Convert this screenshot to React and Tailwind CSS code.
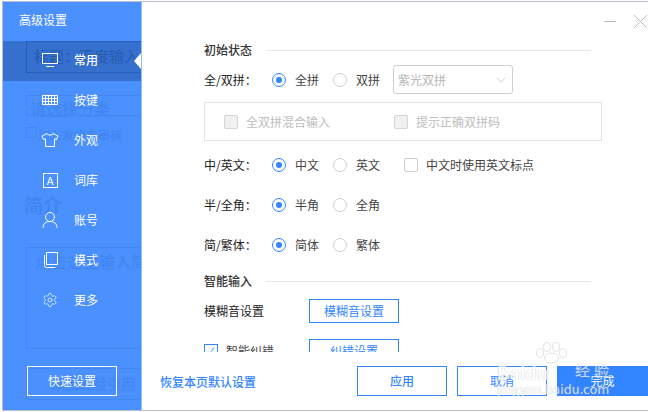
import React from "react";
import { Settings, ChevronDown } from "lucide-react";

const FONT = { fontFamily: '"Noto Sans CJK SC", "Noto Sans", sans-serif' };

function MonitorIcon() {
  return (
    <svg width="18" height="16" viewBox="0 0 18 16" fill="none" stroke="white" strokeWidth="1">
      <rect x="1.5" y="1.5" width="15" height="10" />
      <path d="M5 14.5h8" />
    </svg>
  );
}

function KeyboardIcon() {
  return (
    <svg width="18" height="11" viewBox="0 0 18 11" fill="none" stroke="white" strokeWidth="1">
      <path d="M1.5 0.5h15v9h-15z M1.5 3.5h15 M1.5 6.5h15 M4.5 0.5v9 M7.5 0.5v9 M10.5 0.5v9 M13.5 0.5v9" />
    </svg>
  );
}

function ShirtIcon() {
  return (
    <svg width="18" height="16" viewBox="0 0 18 16" fill="none" stroke="white" strokeWidth="1">
      <path d="M6 1.5 L1 4 L2.5 7.5 L4.5 6.8 V14.5 H13.5 V6.8 L15.5 7.5 L17 4 L12 1.5 C11.5 3.5 6.5 3.5 6 1.5 Z" />
    </svg>
  );
}

function UserIcon() {
  return (
    <svg width="16" height="18" viewBox="0 0 16 18" fill="none" stroke="white" strokeWidth="1">
      <circle cx="8" cy="6" r="4.5" />
      <path d="M1 17 C1 12.5 4 10.5 8 10.5 C12 10.5 15 12.5 15 17" />
    </svg>
  );
}

function CopyIcon() {
  return (
    <svg width="16" height="16" viewBox="0 0 16 16" fill="none" stroke="white" strokeWidth="1">
      <rect x="4.5" y="0.5" width="11" height="12" />
      <path d="M2.5 3v10.5a2 2 0 0 0 2 2h9" />
    </svg>
  );
}

function LetterIcon() {
  return (
    <span className="flex h-[15px] w-[15px] items-center justify-center border border-white text-[11px] leading-none text-white">
      A
    </span>
  );
}

const NAV = [
  { label: "常用", icon: <MonitorIcon />, active: true },
  { label: "按键", icon: <KeyboardIcon /> },
  { label: "外观", icon: <ShirtIcon /> },
  { label: "词库", icon: <LetterIcon /> },
  { label: "账号", icon: <UserIcon /> },
  { label: "模式", icon: <CopyIcon /> },
  { label: "更多", icon: <Settings size={16} strokeWidth={1} color="white" /> },
];

function Radio({ checked, label, width = "w-[61px]" }) {
  return (
    <div className={`flex items-center gap-[9px] ${width}`}>
      {checked ? (
        <span className="flex h-[14px] w-[14px] shrink-0 items-center justify-center rounded-full border border-[#3385ff]">
          <span className="h-[6px] w-[6px] rounded-full bg-[#3385ff]" />
        </span>
      ) : (
        <span className="h-[14px] w-[14px] shrink-0 rounded-full border border-[#cfcfcf]" />
      )}
      <span className="text-[#444]">{label}</span>
    </div>
  );
}

function Check({ label, disabled }) {
  return (
    <div className="flex items-center gap-[8px]">
      <span
        className={
          disabled
            ? "h-[14px] w-[14px] rounded-[2px] border border-[#d5d5d5] bg-[#f0f0f0]"
            : "h-[14px] w-[14px] rounded-[2px] border border-[#cfcfcf]"
        }
      />
      <span className={disabled ? "text-[#bdbdbd]" : "text-[#444]"}>{label}</span>
    </div>
  );
}

function SectionTitle({ children }) {
  return (
    <div className="flex items-center gap-[14px] pr-[11px]">
      <span className="font-medium text-[#333]">{children}</span>
      <span className="h-px flex-1 bg-[#e8e8e8]" />
    </div>
  );
}

function OptionRow({ label, a, b, children }) {
  return (
    <div className="flex h-[20px] items-center">
      <span className="w-[68px] text-[#222]">{label}</span>
      <Radio checked label={a} />
      <Radio label={b} />
      {children}
    </div>
  );
}

function GhostPage() {
  // the page behind the translucent sidebar
  return (
    <div className="absolute inset-0 overflow-hidden whitespace-nowrap text-[#3f84ec]">
      <div className="absolute left-[23px] top-[39px] h-[32px] w-[130px] border border-[#2f6fd0] pl-[7px] pt-[3px] text-[15px] text-[#2a66c4]">
        标题：而度输入
      </div>
      <div className="absolute left-[23px] top-[93px] h-[21px] w-[130px] border border-[#4388f2] pl-[3px] text-[16px] leading-[24px]">
        请选择分类
      </div>
      <div className="absolute left-[23px] top-[125px] h-[11px] w-[11px] border border-[#4388f2]" />
      <div className="absolute left-[35px] top-[124px] text-[12px]">加入发烧友审核</div>
      <div className="absolute left-[21px] top-[189px] text-[19px] font-medium">简介</div>
      <div className="absolute left-[23px] top-[245px] h-[102px] w-[160px] border border-[#4388f2] pl-[8px] pt-[1px] text-[16px]">
        点击这里输入简介
      </div>
      <div className="absolute left-[23px] top-[366px] h-[32px] w-[130px] border border-[#4388f2] pl-[24px] pt-[4px] text-[14px]">
        添加经验引用
      </div>
    </div>
  );
}

function Watermark() {
  return (
    <div className="pointer-events-none absolute left-[497px] top-[342px] flex w-[116px] flex-col text-white opacity-70 [text-shadow:0_0_1px_#9a9a9a]">
      <svg className="ml-[38px]" width="33" height="22" viewBox="0 0 33 22" fill="white" stroke="#c4c4c4" strokeWidth="0.7">
        <ellipse cx="5" cy="11" rx="3.5" ry="4.5" />
        <ellipse cx="12" cy="5" rx="3.5" ry="4.5" />
        <ellipse cx="21" cy="5" rx="3.5" ry="4.5" />
        <ellipse cx="28" cy="11" rx="3.5" ry="4.5" />
        <ellipse cx="16.5" cy="16" rx="7" ry="5" />
      </svg>
      <div className="flex items-start justify-between">
        <span className="text-[18px] font-bold leading-[16px]">Baidu</span>
        <span className="-mt-[2px] text-[15px] leading-[15px] tracking-[4px]">经验</span>
      </div>
      <span className="mt-[3px] text-[13px] leading-[12px]">jingyan.baidu.com</span>
    </div>
  );
}

export default function App() {
  return (
    <div style={FONT} className="relative h-[412px] w-[648px] overflow-hidden bg-white pb-px pl-[2px] pt-px text-[12px]">
      <div className="flex h-full border-b border-l border-t border-[#b8bfcc]">
        <aside className="relative flex w-[139px] shrink-0 flex-col border-r border-[#8fbcff] bg-[#4a90ff] text-white">
          <GhostPage />
          <div className="relative flex h-[39px] items-center pb-[3px] pl-[16px]">高级设置</div>
          <nav className="relative flex flex-col">
            {NAV.map((item) => (
              <div
                key={item.label}
                className={`relative flex h-[40px] items-center pb-[2px] ${item.active ? "bg-[#1f4f9e]/50 font-medium" : ""}`}
              >
                <span className="flex w-[71px] justify-center pl-[37px] pr-[14px]">{item.icon}</span>
                <span>{item.label}</span>
                {item.active && (
                  <span className="absolute right-0 top-[12px] h-0 w-0 border-y-[8px] border-r-[7px] border-y-transparent border-r-white" />
                )}
              </div>
            ))}
          </nav>
          <div className="relative mt-auto pb-[14px] pl-[24px]">
            <button className="h-[30px] w-[90px] border border-white text-white">快速设置</button>
          </div>
        </aside>

        <main className="relative flex min-w-0 flex-1 flex-col">
          <div className="flex h-[38px] items-start justify-end gap-[17px] pt-[12px]">
            <span className="mt-[7px] h-px w-[12px] bg-[#bdbdbd]" />
            <svg width="15" height="15" viewBox="0 0 15 15" stroke="#bdbdbd" strokeWidth="1" fill="none">
              <path d="M1 1l13 13M14 1L1 14" />
            </svg>
          </div>

          <div className="h-[312px] overflow-hidden pl-[62px] pr-[46px] pt-px">
            <SectionTitle>初始状态</SectionTitle>
            <div className="mt-[6px] flex h-[29px] items-center">
              <span className="w-[68px] text-[#222]">全/双拼：</span>
              <Radio checked label="全拼" />
              <Radio label="双拼" width="w-[60px]" />
              <div className="flex h-[29px] w-[120px] items-center justify-between rounded-[3px] border border-[#cfcfcf] pl-[4px] pr-[3px] text-[#b5b5b5]">
                <span>紫光双拼</span>
                <ChevronDown size={16} strokeWidth={1} color="#bdbdbd" />
              </div>
            </div>
            <div className="mt-[8px] flex h-[39px] items-center border border-[#e2e2e2] pl-[19px]">
              <div className="w-[170px]">
                <Check disabled label="全双拼混合输入" />
              </div>
              <Check disabled label="提示正确双拼码" />
            </div>

            <div className="mt-[14px] flex flex-col gap-[20px]">
              <OptionRow label="中/英文：" a="中文" b="英文">
                <div className="ml-[10px]">
                  <Check label="中文时使用英文标点" />
                </div>
              </OptionRow>
              <OptionRow label="半/全角：" a="半角" b="全角" />
              <OptionRow label="简/繁体：" a="简体" b="繁体" />
            </div>

            <div className="mt-[17px]">
              <SectionTitle>智能输入</SectionTitle>
            </div>
            <div className="mt-[9px] flex h-[24px] items-center">
              <span className="w-[105px] text-[#222]">模糊音设置</span>
              <button className="h-[24px] w-[90px] border border-[#3385ff] text-[#3385ff]">模糊音设置</button>
            </div>
            <div className="mt-[16px] flex h-[24px] items-center">
              <span className="flex w-[105px] items-center gap-[8px] text-[#444]">
                <span className="flex h-[14px] w-[14px] items-center justify-center border border-[#3385ff] text-[10px] leading-none text-[#3385ff]">
                  ✓
                </span>
                智能纠错
              </span>
              <button className="h-[24px] w-[90px] border border-[#3385ff] text-[#3385ff]">纠错设置</button>
            </div>
          </div>

          <footer className="flex items-center pl-[18px] pt-[14px]">
            <span className="pt-[2px] font-medium text-[#3385ff]">恢复本页默认设置</span>
            <div className="ml-auto flex gap-[10px]">
              <button className="h-[30px] w-[90px] border border-[#3385ff] font-medium text-[#3385ff]">应用</button>
              <button className="h-[30px] w-[90px] border border-[#3385ff] text-[#3385ff]">取消</button>
              <button className="h-[30px] w-[91px] bg-[#3385ff] text-white">完成</button>
            </div>
          </footer>
        </main>
      </div>
      <Watermark />
    </div>
  );
}
